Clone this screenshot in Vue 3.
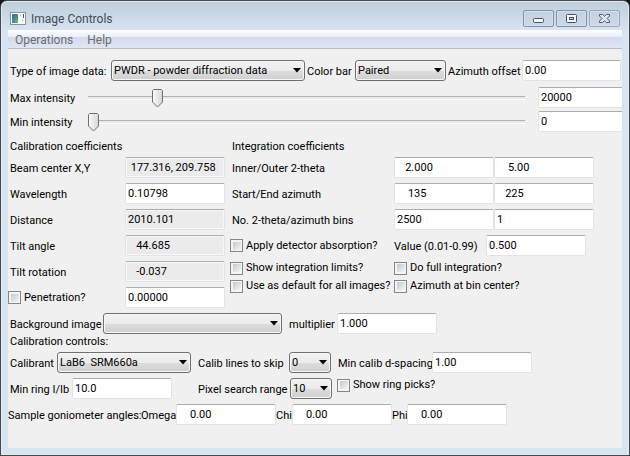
<script setup>
import { reactive } from 'vue'

const form = reactive({
  type: 'PWDR - powder diffraction data',
  color: 'Paired',
  azimuthOffset: '0.00',
  maxSlider: 14,
  maxIntensity: '20000',
  minSlider: 0,
  minIntensity: '0',
  penetration: '0.00000',
  background: '',
  multiplier: '1.000',
  calibrant: 'LaB6  SRM660a',
  skip: '0',
  dspacing: '1.00',
  ring: '10.0',
  range: '10',
  absorption: '0.500',
})

const calibration = [
  { id: 'beam', label: 'Beam center X,Y', value: ' 177.316, 209.758', locked: true },
  { id: 'wave', label: 'Wavelength', value: '0.10798', locked: false },
  { id: 'dist', label: 'Distance', value: '2010.101', locked: true },
  { id: 'tilt', label: 'Tilt angle', value: '   44.685', locked: true },
  { id: 'rot', label: 'Tilt rotation', value: '   -0.037', locked: true },
]

const integration = [
  { id: 'theta', label: 'Inner/Outer 2-theta', from: '   2.000', to: '    5.00' },
  { id: 'azm', label: 'Start/End azimuth', from: '    135', to: '   225' },
  { id: 'bins', label: 'No. 2-theta/azimuth bins', from: '2500', to: '1' },
]

const angles = [
  { id: 'omega', label: 'Omega', value: '    0.00' },
  { id: 'chi', label: 'Chi', value: '    0.00' },
  { id: 'phi', label: 'Phi', value: '    0.00' },
]
</script>

<template>
  <div class="window">
    <header class="titlebar">
      <svg class="app-icon" width="16" height="13" viewBox="0 0 16 13">
        <rect x="0.5" y="0.5" width="15" height="12" fill="#fdfdfd" stroke="#8a939c" />
        <rect x="2" y="2" width="6" height="9" fill="#3f8f86" />
        <rect x="2" y="2" width="3" height="5" fill="#4a74a8" />
        <rect x="5" y="7" width="3" height="4" fill="#5fae7a" />
        <rect x="10" y="2" width="1" height="2" fill="#9cc3d8" />
        <rect x="13" y="2" width="1" height="4" fill="#2d5f94" />
        <rect x="12" y="7" width="1" height="2" fill="#a8b8c4" />
      </svg>
      <h1 class="title">Image Controls</h1>
      <div class="buttons">
        <button type="button" class="win-btn" aria-label="Minimize">
          <svg width="13" height="15" viewBox="0 0 13 15">
            <rect x="1.5" y="7.5" width="10" height="4" rx="1" fill="#f4f6f8" stroke="#4a5160" />
          </svg>
        </button>
        <button type="button" class="win-btn" aria-label="Maximize">
          <svg width="13" height="15" viewBox="0 0 13 15">
            <rect x="1.5" y="3.5" width="10" height="8" rx="1" fill="#f4f6f8" stroke="#4a5160" />
            <rect x="4.5" y="6.5" width="4" height="2" fill="#c3cfdd" stroke="#4a5160" />
          </svg>
        </button>
        <button type="button" class="win-btn close" aria-label="Close">
          <svg width="13" height="15" viewBox="0 0 13 15">
            <path d="M1.5 3.5H4.5L6.5 5.3L8.5 3.5H11.5V5L9 7.5L11.5 10V11.5H8.5L6.5 9.7L4.5 11.5H1.5V10L4 7.5L1.5 5Z" fill="#e4e8ee" stroke="#555b68" stroke-linejoin="round" />
          </svg>
        </button>
      </div>
    </header>

    <main class="client">
      <nav class="menu">
        <button type="button">Operations</button>
        <button type="button">Help</button>
      </nav>

      <form class="panel" @submit.prevent>
        <div class="row type-row">
          <label for="type">Type of image data:</label>
          <span class="combo">
            <select id="type" v-model="form.type"><option>PWDR - powder diffraction data</option></select>
            <svg class="arrow" width="8" height="5" viewBox="0 0 8 5"><path d="M0 0H8L4 4.5Z" /></svg>
          </span>
          <label for="color">Color bar</label>
          <span class="combo">
            <select id="color" v-model="form.color"><option>Paired</option></select>
            <svg class="arrow" width="8" height="5" viewBox="0 0 8 5"><path d="M0 0H8L4 4.5Z" /></svg>
          </span>
          <label for="offset">Azimuth offset</label>
          <input id="offset" v-model="form.azimuthOffset" type="text" class="field" />
        </div>

        <div class="sliders">
          <div class="row slider-row">
            <label for="max">Max intensity</label>
            <input id="max" v-model="form.maxSlider" type="range" min="0" max="93" class="slider" />
            <input v-model="form.maxIntensity" type="text" class="field" aria-label="Max intensity value" />
          </div>
          <div class="row slider-row">
            <label for="min">Min intensity</label>
            <input id="min" v-model="form.minSlider" type="range" min="0" max="93" class="slider" />
            <input v-model="form.minIntensity" type="text" class="field" aria-label="Min intensity value" />
          </div>
        </div>

        <div class="columns">
          <section class="calib">
            <h2>Calibration coefficients</h2>
            <div v-for="c in calibration" :key="c.id" class="row calib-row">
              <label :for="c.id">{{ c.label }}</label>
              <input :id="c.id" :value="c.value" :readonly="c.locked" type="text" class="field" :class="{ locked: c.locked }" />
            </div>
            <div class="row calib-row">
              <label class="check outset"><input type="checkbox" />Penetration?</label>
              <input v-model="form.penetration" type="text" class="field" aria-label="Penetration" />
            </div>
          </section>

          <section class="integ">
            <h2>Integration coefficients</h2>
            <div v-for="i in integration" :key="i.id" class="row integ-row">
              <label :for="i.id">{{ i.label }}</label>
              <input :id="i.id" :value="i.from" type="text" class="field" />
              <input :value="i.to" type="text" class="field" :aria-label="i.label" />
            </div>
            <div class="row absorb-row">
              <label class="check outset"><input type="checkbox" />Apply detector absorption?</label>
              <label for="absorb">Value (0.01-0.99)</label>
              <input id="absorb" v-model="form.absorption" type="text" class="field" />
            </div>
            <div class="checks">
              <label class="check outset"><input type="checkbox" />Show integration limits?</label>
              <label class="check"><input type="checkbox" />Do full integration?</label>
              <label class="check outset"><input type="checkbox" />Use as default for all images?</label>
              <label class="check"><input type="checkbox" />Azimuth at bin center?</label>
            </div>
          </section>
        </div>

        <div class="row back-row">
          <label for="back">Background image</label>
          <span class="combo">
            <select id="back" v-model="form.background"><option value=""></option></select>
            <svg class="arrow" width="8" height="5" viewBox="0 0 8 5"><path d="M0 0H8L4 4.5Z" /></svg>
          </span>
          <label for="mult">multiplier</label>
          <input id="mult" v-model="form.multiplier" type="text" class="field" />
        </div>

        <h2 class="controls-head">Calibration controls:</h2>

        <div class="row cal-row">
          <label for="calibrant">Calibrant</label>
          <span class="combo">
            <select id="calibrant" v-model="form.calibrant"><option value="LaB6  SRM660a">LaB6&nbsp; SRM660a</option></select>
            <svg class="arrow" width="8" height="5" viewBox="0 0 8 5"><path d="M0 0H8L4 4.5Z" /></svg>
          </span>
          <label for="skip">Calib lines to skip</label>
          <span class="combo">
            <select id="skip" v-model="form.skip"><option>0</option></select>
            <svg class="arrow" width="8" height="5" viewBox="0 0 8 5"><path d="M0 0H8L4 4.5Z" /></svg>
          </span>
          <label for="dsp">Min calib d-spacing</label>
          <input id="dsp" v-model="form.dspacing" type="text" class="field" />
        </div>

        <div class="row ring-row">
          <label for="ring">Min ring I/Ib</label>
          <input id="ring" v-model="form.ring" type="text" class="field" />
          <label for="range">Pixel search range</label>
          <span class="combo">
            <select id="range" v-model="form.range"><option>10</option></select>
            <svg class="arrow" width="8" height="5" viewBox="0 0 8 5"><path d="M0 0H8L4 4.5Z" /></svg>
          </span>
          <label class="check top"><input type="checkbox" />Show ring picks?</label>
        </div>

        <div class="row angle-row">
          <span class="caption">Sample goniometer angles:</span>
          <template v-for="a in angles" :key="a.id">
            <label :for="a.id">{{ a.label }}</label>
            <input :id="a.id" :value="a.value" type="text" class="field" />
          </template>
        </div>
      </form>
    </main>
  </div>
</template>

<style>
body {
  margin: 0;
  background: #17171a;
}
</style>

<style scoped>
.window {
  box-sizing: border-box;
  min-height: 100vh;
  display: flex;
  flex-direction: column;
  padding: 0 7px 7px;
  border: 1px solid #4a464b;
  border-radius: 7px 7px 0 0;
  background: linear-gradient(#bfcddb, #d7e4f2 30px);
  box-shadow: inset 0 0 0 1px #e3ecf5;
  font-family: Roboto, "Open Sans", sans-serif;
  font-size: 11px;
  line-height: 14px;
  color: #000;
}

.titlebar {
  display: flex;
  align-items: center;
  gap: 5px;
  height: 29px;
  padding: 6px 2px 0;
  box-sizing: border-box;
}

.title {
  margin: 0;
  flex: 1;
  font: 12px/16px Roboto, "Open Sans", sans-serif;
  color: #444c56;
}

.buttons {
  display: flex;
  gap: 2px;
}

.win-btn {
  box-sizing: border-box;
  display: flex;
  align-items: center;
  justify-content: center;
  width: 31px;
  height: 17px;
  padding: 0;
  border: 1px solid #8291ab;
  border-radius: 2px;
  background: linear-gradient(#c3d0df, #cbd9e8);
  box-shadow: inset 0 0 0 1px #d6e0ec;
}

.win-btn.close {
  border-color: #9aa8ba;
}

.client {
  flex: 1;
  background: #f0f0f0;
  overflow: hidden;
}

.menu {
  display: flex;
  gap: 14px;
  height: 18px;
  padding-left: 7px;
  border-bottom: 1px solid #b6bccc;
  background: linear-gradient(#fff, #e9edf6 7px, #d4daed 7px, #e1e6f6);
}

.menu button {
  padding: 0;
  border: 0;
  background: none;
  font: 12px/20px Roboto, "Open Sans", sans-serif;
  color: #6d6d6d;
}

.panel {
  display: flex;
  flex-direction: column;
  gap: 5px;
  padding-top: 11px;
}

.row {
  display: grid;
  align-items: center;
  height: 21px;
  white-space: nowrap;
}

.row > label:not(.check),
.caption {
  padding-top: 2px;
}

h2 {
  margin: 0;
  font-size: 11px;
  font-weight: normal;
  line-height: 14px;
}

.type-row {
  grid-template-columns: 101px 194px 50px 91px 76px 1fr;
  padding: 0 1px 0 2px;
}

.type-row label:nth-of-type(n + 2) {
  padding-left: 2px;
}

.sliders {
  display: grid;
  gap: 3px;
  padding-top: 1px;
}

.slider-row {
  grid-template-columns: 78px 1fr 84px;
  padding-left: 2px;
}

.slider-row .slider {
  margin-right: 13px;
}

.slider-row .field {
  width: 100px;
}

.columns {
  display: grid;
  grid-template-columns: 217px 1fr;
  gap: 5px;
  padding: 3px 2px 0;
}

.calib,
.integ {
  display: grid;
  gap: 5px;
  align-content: start;
}

.calib h2,
.integ h2 {
  margin-bottom: -2px;
}

.calib-row {
  grid-template-columns: 115px 100px;
}

.integ-row {
  grid-template-columns: 162px 100px 100px;
}

.absorb-row {
  grid-template-columns: 162px 92px 100px;
}

.checks {
  display: grid;
  grid-template-columns: 162px 1fr;
  row-gap: 4px;
  white-space: nowrap;
}

.check {
  display: flex;
  align-items: center;
  gap: 3px;
}

.check.outset {
  margin-left: -2px;
}

.check.top {
  align-self: start;
}

.back-row {
  grid-template-columns: 93px 179px 55px 100px;
  padding-left: 2px;
}

.back-row label:nth-of-type(2),
.cal-row label:nth-of-type(n + 2),
.ring-row label:nth-of-type(n + 2):not(.check) {
  padding-left: 7px;
}

.controls-head {
  margin: -4px 0 -2px;
  padding-left: 2px;
}

.cal-row {
  grid-template-columns: 47px 134px 98px 42px 101px 100px;
  padding-left: 2px;
}

.ring-row {
  grid-template-columns: 62px 119px 99px 47px 1fr;
  padding-left: 2px;
}

.ring-row .field {
  width: 100px;
}

.ring-row .combo {
  width: 42px;
}

.angle-row {
  grid-template-columns: 133px 35px 100px 16px 100px 15px 100px;
}

.field {
  box-sizing: border-box;
  width: 100%;
  height: 21px;
  padding: 0 2px 1px;
  border: 1px solid #e2e3ea;
  border-top-color: #abadb3;
  border-radius: 2px;
  background: #fff;
  font: inherit;
  color: #000;
  outline: 0;
}

.locked {
  background: #ebebeb;
  box-shadow: inset 0 0 0 1px #f8f8f8;
}

.combo {
  display: grid;
  align-items: center;
}

.combo > * {
  grid-area: 1 / 1;
}

.combo select {
  box-sizing: border-box;
  width: 100%;
  height: 21px;
  padding: 0 16px 0 2px;
  border: 1px solid #707070;
  border-radius: 3px;
  appearance: none;
  background: linear-gradient(#f2f2f2, #ebebeb 10px, #dddddd 10px, #cfcfcf);
  box-shadow: inset 0 0 0 1px #f7f7f7;
  font: inherit;
  color: #000;
}

.arrow {
  justify-self: end;
  margin-right: 4px;
  pointer-events: none;
}

input[type="checkbox"] {
  box-sizing: border-box;
  width: 13px;
  height: 13px;
  margin: 0;
  flex: none;
  border: 1px solid #858686;
  appearance: none;
  background: linear-gradient(135deg, #c3c8cf, #f6f6f6) center / 8px 8px no-repeat content-box, #f4f4f4;
}

.slider {
  height: 19px;
  margin: 0;
  appearance: none;
  background: none;
}

.slider::-webkit-slider-runnable-track {
  height: 4px;
  border-top: 1px solid #b0b0b0;
  border-bottom: 1px solid #fff;
  box-sizing: border-box;
  background: #e7eaea;
}

.slider::-webkit-slider-thumb {
  width: 11px;
  height: 19px;
  margin-top: -8px;
  appearance: none;
  background: url("data:image/svg+xml,%3Csvg xmlns='http://www.w3.org/2000/svg' width='11' height='19'%3E%3Cdefs%3E%3ClinearGradient id='g'%3E%3Cstop stop-color='%23fafafa'/%3E%3Cstop offset='1' stop-color='%23d6d6d6'/%3E%3C/linearGradient%3E%3C/defs%3E%3Cpath d='M1.5 .5H9.5L10.5 1.5V13L5.5 18L.5 13V1.5Z' fill='url(%23g)' stroke='%23707070'/%3E%3C/svg%3E") no-repeat;
}
</style>
